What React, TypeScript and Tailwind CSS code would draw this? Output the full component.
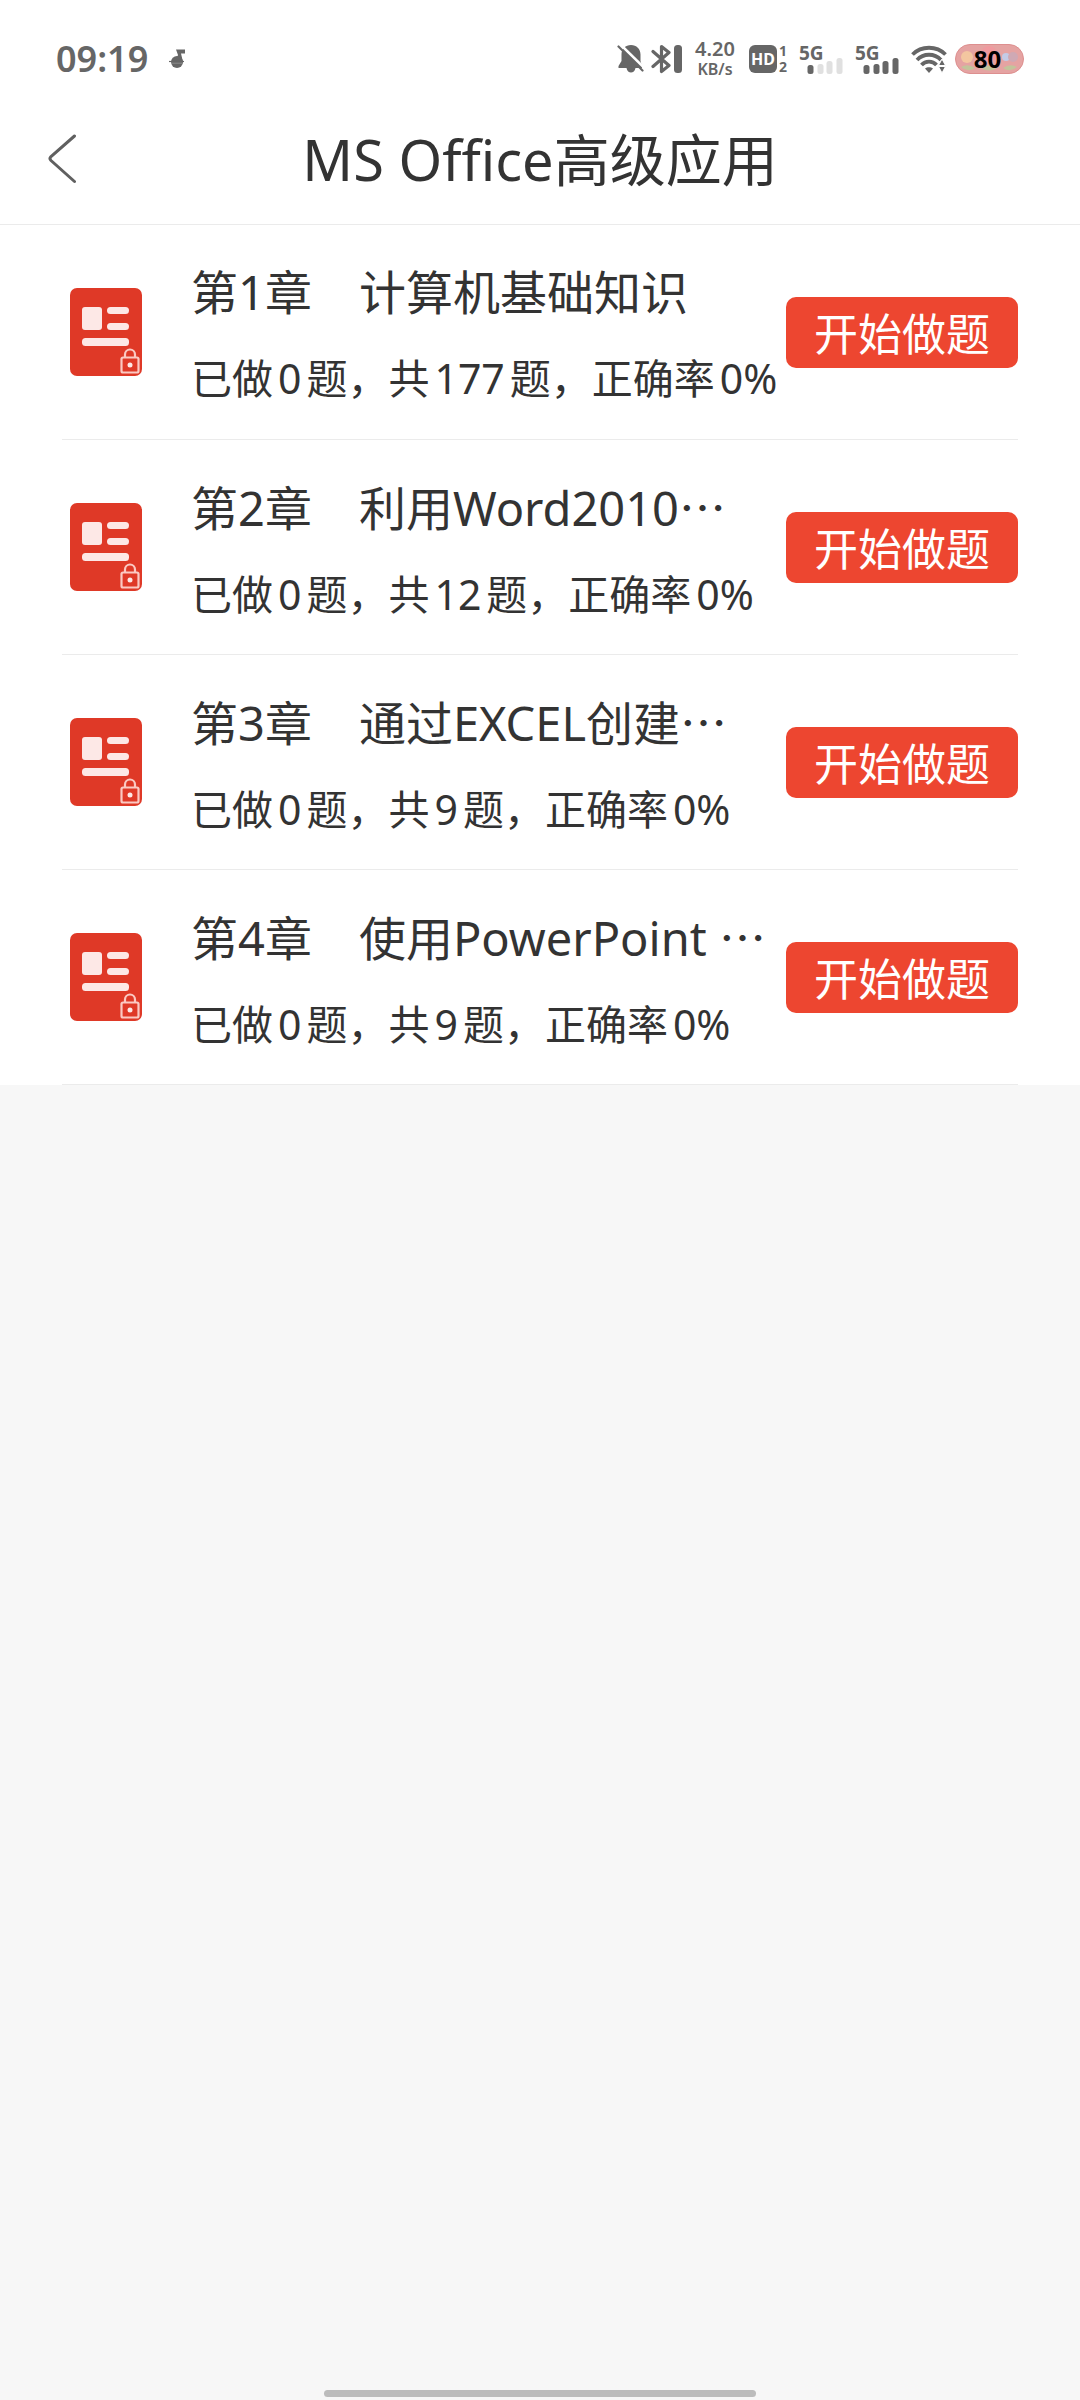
import React from "react";

const chapters = [
  { id: 1, title: "第1章　计算机基础知识", cut: false, total: 177 },
  { id: 2, title: "第2章　利用Word2010", cut: true, total: 12 },
  { id: 3, title: "第3章　通过EXCEL创建", cut: true, total: 9 },
  { id: 4, title: "第4章　使用PowerPoint ", cut: true, total: 9 },
];

function MusicNote() {
  return (
    <svg width="18" height="20" viewBox="0 0 18 20" fill="#666666" aria-hidden="true">
      <path d="M8 0.500H17V4.500H13L15 13H7L10 6Z" />
      <circle cx="9" cy="13" r="6" />
      <path d="M1 12.500H16" stroke="#666666" strokeWidth="1.200" />
      <path d="M3 14.200H14" stroke="#b0b0b0" strokeWidth="0.500" />
    </svg>
  );
}

function BellOff() {
  return (
    <svg width="28" height="30" viewBox="0 0 28 30" aria-hidden="true">
      <path
        d="M14 1C8.500 1 4.500 5 4.500 10.500V17L1.500 22V24H9.500C10 27 12 28.500 14 28.500S18 27 18.500 24H25V22L23.500 17V10.500C23.500 5 19.500 1 14 1Z"
        fill="#666666"
      />
      <path d="M3.500 0.500L28 24.500" stroke="#ffffff" strokeWidth="2.500" />
      <path d="M1.500 2.500L25.500 26.500" stroke="#666666" strokeWidth="2.200" strokeLinecap="round" />
    </svg>
  );
}

function Bluetooth() {
  return (
    <svg width="32" height="30" viewBox="0 0 32 30" aria-hidden="true">
      <path
        d="M2 7.500L18 21.500L10.500 27.500V2.500L18 8.500L2 22.500"
        fill="none"
        stroke="#666666"
        strokeWidth="3.200"
        strokeLinejoin="round"
        strokeLinecap="round"
      />
      <rect x="23" y="1" width="8" height="28" rx="3.500" fill="#666666" />
    </svg>
  );
}

function Signal({ strength }: { strength: number }) {
  const bars = [
    { x: 0, h: 9 },
    { x: 10, h: 10 },
    { x: 19, h: 13 },
    { x: 29, h: 16 },
  ];
  return (
    <div className="flex w-11 flex-col">
      <span className="text-[19px] leading-4 font-bold">5G</span>
      <svg className="-mt-1 ml-2" width="36" height="17" viewBox="0 0 36 17" aria-hidden="true">
        {bars.map((b, i) => (
          <rect
            key={b.x}
            x={b.x + 0.5}
            y={17 - b.h}
            width="6"
            height={b.h}
            rx="2.500"
            fill={i < strength ? "#666666" : "#e0e0e0"}
          />
        ))}
      </svg>
    </div>
  );
}

function Wifi() {
  return (
    <svg width="36" height="30" viewBox="0 0 36 30" aria-hidden="true">
      <g fill="none" stroke="#666666" strokeWidth="3.800">
        <path d="M1.500 10.500C10.500 1.500 25.500 1.500 34.500 10.500" />
        <path d="M6 16C12.500 9 23.500 9 30 16" />
        <path d="M10.500 21C14.500 16.500 21.500 16.500 25.500 21" />
      </g>
      <path d="M14 24.500C16 22.800 20 22.800 22 24.500L18 29Z" fill="#666666" />
      <path d="M27.500 21.500L31 15L34.500 21.500ZM27.500 22.500H34.500L31 29Z" fill="#666666" stroke="#ffffff" strokeWidth="1" />
    </svg>
  );
}

function Battery() {
  return (
    <div className="relative flex h-[30px] w-[69px] items-center justify-center pr-1">
      <svg className="absolute inset-0" width="69" height="30" viewBox="0 0 69 30" aria-hidden="true">
        <rect x="0.500" y="0.500" width="68" height="29" rx="14.500" fill="#e5a3a2" stroke="#dd8f8f" />
        <circle cx="12" cy="13" r="6" fill="#f3c6a0" />
        <circle cx="34" cy="10" r="8" fill="#f09a9f" />
        <circle cx="51" cy="13" r="4" fill="#c4cbe6" />
        <circle cx="58" cy="13" r="5" fill="#cfa9b4" />
        <path d="M6 23Q13 19 20 24Q13 29 6 23ZM26 24Q34 19 42 24Q34 29 26 24ZM48 24Q55 19 62 23Q55 29 48 24Z" fill="#c3c49b" />
      </svg>
      <span className="relative text-[24px] leading-7 font-bold text-black">80</span>
    </div>
  );
}

function StatusBar() {
  return (
    <div className="flex h-[118px] items-center justify-between pr-14 pl-14 text-[#666666]">
      <div className="flex items-center gap-5">
        <span className="text-[36px] leading-9 font-semibold">09:19</span>
        <MusicNote />
      </div>
      <div className="flex items-center">
        <BellOff />
        <div className="ml-1.5">
          <Bluetooth />
        </div>
        <div className="mr-0.5 ml-2 flex w-12 flex-col items-center font-semibold">
          <span className="text-[20px] leading-5">4.20</span>
          <span className="text-[16px] leading-5">KB/s</span>
        </div>
        <div className="ml-2 flex h-7 w-7 items-center justify-center rounded-md bg-[#666666] text-[16px] font-bold text-white">
          HD
        </div>
        <div className="ml-0.5 flex flex-col text-[14px] leading-4 font-bold">
          <span>1</span>
          <span>2</span>
        </div>
        <div className="ml-3 flex gap-3">
          <Signal strength={1} />
          <Signal strength={4} />
        </div>
        <div className="ml-3">
          <Wifi />
        </div>
        <div className="ml-2">
          <Battery />
        </div>
      </div>
    </div>
  );
}

function ChapterIcon() {
  return (
    <svg className="shrink-0" width="74" height="90" viewBox="0 0 74 90" aria-hidden="true">
      <rect x="1" y="1" width="72" height="88" rx="7" fill="#df3927" />
      <g fill="#fde8e6">
        <rect x="13" y="20" width="20" height="23" rx="3" />
        <rect x="38" y="20" width="22" height="7" rx="3.500" />
        <rect x="38" y="36" width="22" height="7" rx="3.500" />
        <rect x="13" y="51" width="47" height="8" rx="3.500" />
        <circle cx="61" cy="78" r="2.500" />
      </g>
      <g fill="none" stroke="#fbc9c2" strokeWidth="2.200">
        <rect x="52.500" y="70.500" width="17" height="15" rx="1.500" />
        <path d="M56 70V67.500A5 5 0 0 1 66 67.500V70" />
      </g>
    </svg>
  );
}

export default function App() {
  return (
    <div
      lang="zh-CN"
      className="flex min-h-screen flex-col bg-[#f7f7f7] font-['Noto_Sans','Noto_Sans_CJK_SC',sans-serif] text-[#333333]"
    >
      <header className="border-b border-[#ebebeb] bg-white">
        <StatusBar />
        <div className="grid h-[106px] grid-cols-[120px_1fr_120px] items-center pb-6">
          <button type="button" aria-label="返回" className="flex h-20 items-center pl-12">
            <svg width="30" height="50" viewBox="0 0 30 50" fill="none" aria-hidden="true">
              <path
                d="M26.500 2L3 22.500Q1 24.500 3 26.500L26.500 47.500"
                stroke="#606060"
                strokeWidth="3"
                strokeLinecap="round"
              />
            </svg>
          </button>
          <h1 className="text-center text-[56px] leading-[80px]">MS Office高级应用</h1>
        </div>
      </header>

      <main className="bg-white px-[62px]">
        <ul>
          {chapters.map((c) => (
            <li key={c.id} className="flex h-[215px] items-center border-b border-[#ebebeb] pl-[7px]">
              <ChapterIcon />
              <div className="ml-12 flex min-w-0 flex-1 flex-col gap-[34px] pt-0.5 whitespace-nowrap">
                <h2 className="text-[47px] leading-[56px]">
                  {c.title}
                  {c.cut && <span className="font-['Noto_Sans_CJK_SC',sans-serif]">…</span>}
                </h2>
                <p className="text-[41px] leading-[48px]">
                  已做<span className="mx-[5px]">0</span>题，共<span className="mx-[5px]">{c.total}</span>
                  题，正确率<span className="ml-[5px]">0%</span>
                </p>
              </div>
              <button
                type="button"
                className="h-[71px] w-[232px] shrink-0 rounded-[10px] bg-[#ed4630] pt-1 text-[44px] leading-[64px] text-white"
              >
                开始做题
              </button>
            </li>
          ))}
        </ul>
      </main>

      <div className="mx-auto mt-auto mb-[3px] h-[7px] w-2/5 rounded-full bg-[#bcbcbc]" />
    </div>
  );
}
